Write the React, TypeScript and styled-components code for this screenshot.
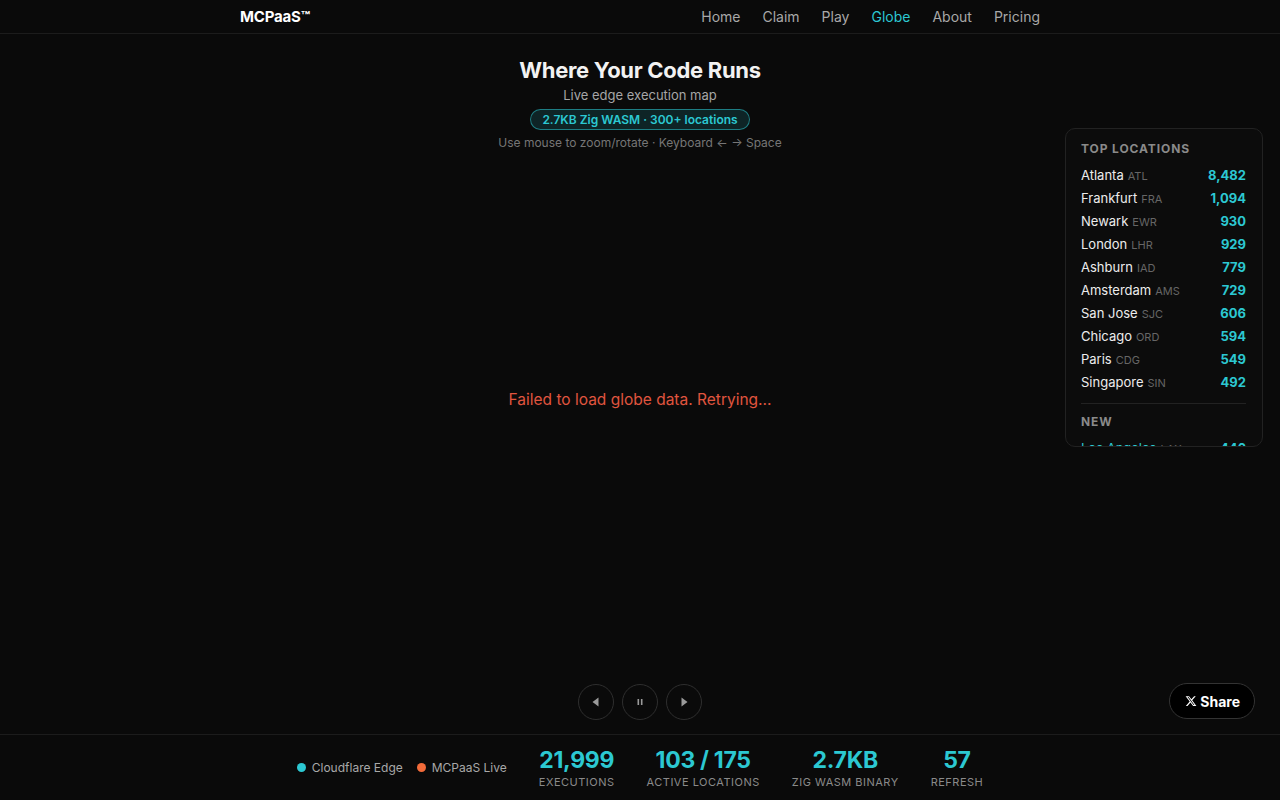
import React from "react";
import styled, { createGlobalStyle } from "styled-components";

const GlobalStyle = createGlobalStyle`
  html, body {
    margin: 0;
    padding: 0;
    background: #0a0a0a;
    color: #e8e8e8;
    font-family: Inter, "Noto Sans", "Liberation Sans", sans-serif;
    -webkit-font-smoothing: antialiased;
  }
  * { box-sizing: border-box; }
`;

const TEAL = "#2cc8d2";

const Page = styled.div`
  height: 800px;
  display: flex;
  flex-direction: column;
  background: #0a0a0a;
  overflow: hidden;
`;

const Nav = styled.header`
  height: 34px;
  flex-shrink: 0;
  border-bottom: 1px solid #1c1c1c;
`;

const NavInner = styled.div`
  width: 800px;
  height: 100%;
  margin: 0 auto;
  display: flex;
  align-items: center;
  justify-content: space-between;
`;

const Logo = styled.div`
  font-size: 15px;
  font-weight: 700;
  color: #fff;
  letter-spacing: -0.2px;
`;

const NavLinks = styled.nav`
  display: flex;
  gap: 22px;
`;

const NavLink = styled.a<{ $active?: boolean }>`
  font-size: 14px;
  color: ${(p) => (p.$active ? TEAL : "#a8a8a8")};
  text-decoration: none;
  cursor: pointer;
`;

const Main = styled.main`
  position: relative;
  flex: 1;
  display: flex;
  flex-direction: column;
  align-items: center;
  padding: 22px 0 14px;
`;

const Title = styled.h1`
  margin: 0;
  font-size: 22px;
  line-height: 28px;
  font-weight: 700;
  color: #f2f2f2;
  letter-spacing: -0.3px;
`;

const Subtitle = styled.p`
  margin: 3px 0 0;
  font-size: 13px;
  line-height: 17px;
  color: #a6a6a6;
`;

const Badge = styled.span`
  margin-top: 5px;
  padding: 1.5px 11px;
  font-size: 12px;
  line-height: 16px;
  font-weight: 600;
  color: ${TEAL};
  background: rgba(44, 200, 210, 0.14);
  border: 1px solid rgba(44, 200, 210, 0.55);
  border-radius: 999px;
`;

const Hint = styled.p`
  margin: 5px 0 0;
  font-size: 12px;
  line-height: 16px;
  color: #767676;
`;

const GlobeArea = styled.div`
  flex: 1;
  width: 100%;
  display: flex;
  align-items: center;
  justify-content: center;
  padding-bottom: 36px;
`;

const ErrorText = styled.div`
  font-size: 15.5px;
  color: #e0553f;
`;

const Controls = styled.div`
  display: flex;
  gap: 8px;
`;

const CircleButton = styled.button`
  width: 36px;
  height: 36px;
  border-radius: 50%;
  border: 1px solid #2e2e2e;
  background: transparent;
  display: flex;
  align-items: center;
  justify-content: center;
  padding: 0;
  cursor: pointer;
`;

const ShareButton = styled.button`
  position: absolute;
  right: 25px;
  bottom: 15px;
  height: 36px;
  padding: 0 14px 0 15px;
  border-radius: 999px;
  border: 1px solid #333;
  background: #000;
  color: #fff;
  font-family: inherit;
  font-size: 14px;
  font-weight: 700;
  display: flex;
  align-items: center;
  gap: 3px;
  cursor: pointer;
`;

const Panel = styled.aside`
  position: absolute;
  top: 94px;
  right: 17px;
  width: 198px;
  height: 319px;
  overflow: hidden;
  padding: 12px 16px 0 15px;
  background: #0c0c0c;
  border: 1px solid #222;
  border-radius: 10px;
`;

const PanelTitle = styled.div`
  font-size: 12px;
  font-weight: 700;
  letter-spacing: 0.9px;
  color: #8a8a8a;
  line-height: 16px;
  margin-bottom: 6px;
`;

const Row = styled.div`
  display: flex;
  justify-content: space-between;
  align-items: baseline;
  height: 23px;
  line-height: 23px;
`;

const CityName = styled.span<{ $new?: boolean }>`
  font-size: 13px;
  color: ${(p) => (p.$new ? TEAL : "#ececec")};
`;

const Code = styled.span`
  font-size: 11px;
  color: #666;
  margin-left: 4px;
`;

const Count = styled.span`
  font-size: 13px;
  font-weight: 700;
  color: ${TEAL};
`;

const Divider = styled.div`
  height: 1px;
  background: #222;
  margin: 10px 0 10px;
`;

const Footer = styled.footer`
  height: 66px;
  flex-shrink: 0;
  border-top: 1px solid #1c1c1c;
  display: flex;
  align-items: center;
  justify-content: center;
  gap: 32px;
`;

const Legend = styled.div`
  display: flex;
  gap: 14px;
`;

const LegendItem = styled.span`
  display: flex;
  align-items: center;
  gap: 6px;
  font-size: 12px;
  color: #a8a8a8;
`;

const Dot = styled.span<{ $color: string }>`
  width: 9px;
  height: 9px;
  border-radius: 50%;
  background: ${(p) => p.$color};
`;

const Stat = styled.div`
  display: flex;
  flex-direction: column;
  align-items: center;
`;

const StatValue = styled.div`
  font-size: 23px;
  line-height: 28px;
  font-weight: 700;
  color: ${TEAL};
  letter-spacing: -0.3px;
`;

const StatLabel = styled.div`
  margin-top: 1px;
  font-size: 11px;
  line-height: 14px;
  letter-spacing: 0.5px;
  color: #8a8a8a;
`;

const top = [
  ["Atlanta", "ATL", "8,482"],
  ["Frankfurt", "FRA", "1,094"],
  ["Newark", "EWR", "930"],
  ["London", "LHR", "929"],
  ["Ashburn", "IAD", "779"],
  ["Amsterdam", "AMS", "729"],
  ["San Jose", "SJC", "606"],
  ["Chicago", "ORD", "594"],
  ["Paris", "CDG", "549"],
  ["Singapore", "SIN", "492"],
];

const fresh = [["Los Angeles", "LAX", "446"]];

const stats = [
  ["21,999", "EXECUTIONS"],
  ["103 / 175", "ACTIVE LOCATIONS"],
  ["2.7KB", "ZIG WASM BINARY"],
  ["57", "REFRESH"],
];

const App: React.FC = () => {
  return (
    <Page>
      <GlobalStyle />
      <Nav>
        <NavInner>
          <Logo>MCPaaS™</Logo>
          <NavLinks>
            <NavLink>Home</NavLink>
            <NavLink>Claim</NavLink>
            <NavLink>Play</NavLink>
            <NavLink $active>Globe</NavLink>
            <NavLink>About</NavLink>
            <NavLink>Pricing</NavLink>
          </NavLinks>
        </NavInner>
      </Nav>
      <Main>
        <Title>Where Your Code Runs</Title>
        <Subtitle>Live edge execution map</Subtitle>
        <Badge>2.7KB Zig WASM · 300+ locations</Badge>
        <Hint>Use mouse to zoom/rotate · Keyboard ← → Space</Hint>
        <GlobeArea>
          <ErrorText>Failed to load globe data. Retrying...</ErrorText>
        </GlobeArea>
        <Controls>
          <CircleButton aria-label="Previous">
            <svg width="12" height="12" viewBox="0 0 12 12">
              <path d="M8.5 1.5v9L2.5 6z" fill="#9a9a9a" />
            </svg>
          </CircleButton>
          <CircleButton aria-label="Pause">
            <svg width="10" height="10" viewBox="0 0 10 10">
              <rect x="2.5" y="2" width="1.6" height="6" fill="#9a9a9a" />
              <rect x="5.9" y="2" width="1.6" height="6" fill="#9a9a9a" />
            </svg>
          </CircleButton>
          <CircleButton aria-label="Next">
            <svg width="12" height="12" viewBox="0 0 12 12">
              <path d="M3.5 1.5v9L9.5 6z" fill="#9a9a9a" />
            </svg>
          </CircleButton>
        </Controls>
        <ShareButton>
          <svg width="12" height="12" viewBox="0 0 24 24">
            <path
              fill="#fff"
              d="M18.244 2.25h3.308l-7.227 8.26 8.502 11.24H16.17l-5.214-6.817L4.99 21.75H1.68l7.73-8.835L1.254 2.25H8.08l4.713 6.231zm-1.161 17.52h1.833L7.084 4.126H5.117z"
            />
          </svg>
          Share
        </ShareButton>
        <Panel>
          <PanelTitle>TOP LOCATIONS</PanelTitle>
          {top.map(([name, code, count]) => (
            <Row key={code}>
              <span>
                <CityName>{name}</CityName>
                <Code>{code}</Code>
              </span>
              <Count>{count}</Count>
            </Row>
          ))}
          <Divider />
          <PanelTitle>NEW</PanelTitle>
          {fresh.map(([name, code, count]) => (
            <Row key={code}>
              <span>
                <CityName $new>{name}</CityName>
                <Code>{code}</Code>
              </span>
              <Count>{count}</Count>
            </Row>
          ))}
        </Panel>
      </Main>
      <Footer>
        <Legend>
          <LegendItem>
            <Dot $color="#2cc8d2" />
            Cloudflare Edge
          </LegendItem>
          <LegendItem>
            <Dot $color="#f26b3a" />
            MCPaaS Live
          </LegendItem>
        </Legend>
        {stats.map(([value, label]) => (
          <Stat key={label}>
            <StatValue>{value}</StatValue>
            <StatLabel>{label}</StatLabel>
          </Stat>
        ))}
      </Footer>
    </Page>
  );
};

export default App;
